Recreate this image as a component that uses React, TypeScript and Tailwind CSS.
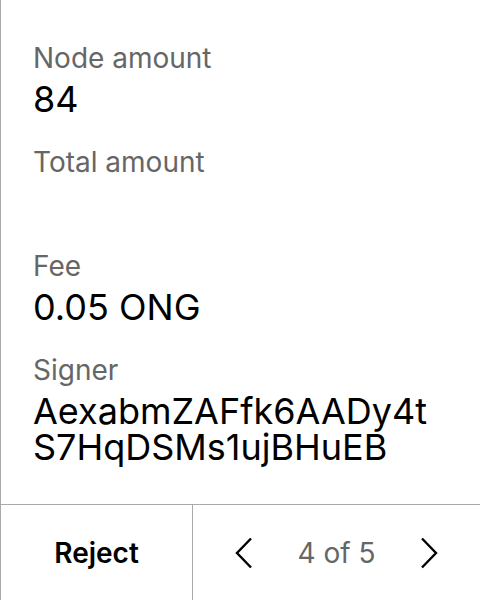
type FieldProps = {
  label: string;
  value?: string;
};

const Field = ({ label, value }: FieldProps) => (
  <div className="mb-[28px]">
    <div className="text-[28px] leading-[34px] text-[#666666]">{label}</div>
    <div className="mt-[6px] min-h-[36px] break-all text-[36px] leading-[36px] text-black">
      {value}
    </div>
  </div>
);

const Chevron = ({ dir }: { dir: 'left' | 'right' }) => (
  <svg width="18" height="32" viewBox="0 0 18 32" fill="none" className="shrink-0">
    <path
      d={dir === 'left' ? 'M16 1.5 L2 16 L16 30.5' : 'M2 1.5 L16 16 L2 30.5'}
      stroke="black"
      strokeWidth="2.4"
      strokeLinecap="butt"
      strokeLinejoin="miter"
    />
  </svg>
);

export default function App() {
  return (
    <div
      className="flex h-[600px] w-[480px] flex-col border-l border-[#aaaaaa] bg-white"
      style={{ fontFamily: 'Inter, "Noto Sans", sans-serif' }}
    >
      <div className="flex-1 pl-[32px] pr-[38px] pt-[41px]">
        <Field label="Node amount" value="84" />
        <Field label="Total amount" />
        <Field label="Fee" value="0.05 ONG" />
        <Field label="Signer" value="AexabmZAFfk6AADy4tS7HqDSMs1ujBHuEB" />
      </div>
      <div className="flex h-[96px] border-t border-[#aaaaaa]">
        <button className="flex w-[192px] items-center justify-center border-r border-[#aaaaaa] text-[28px] font-semibold text-black">
          Reject
        </button>
        <div className="flex flex-1 items-center justify-center gap-[44px]">
          <Chevron dir="left" />
          <span className="text-[28px] text-[#666666]">4 of 5</span>
          <Chevron dir="right" />
        </div>
      </div>
    </div>
  );
}
